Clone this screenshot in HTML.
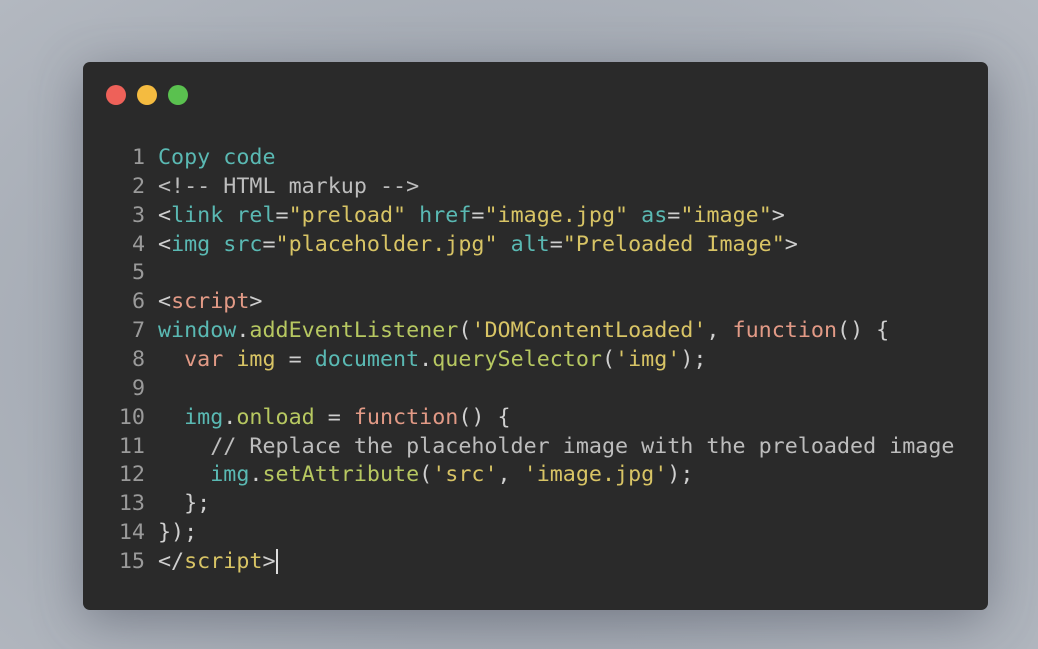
<!DOCTYPE html>
<html><head><style>
html,body{margin:0;width:1038px;height:649px;overflow:hidden;background:#a9afb8;}
.card{position:absolute;left:83px;top:62px;width:905px;height:548px;background:#2a2a2a;border-radius:7px;box-shadow:0 10px 50px rgba(60,65,80,.45);}
.dot{position:absolute;top:85px;width:20px;height:20px;border-radius:50%;}
pre{position:absolute;left:110px;top:144px;margin:0;font-family:"DejaVu Sans Mono","Liberation Mono",monospace;font-size:21.7px;line-height:28.86px;color:#cfcfcf;}
.n{color:#9a9a9a;display:inline-block;width:35px;text-align:right;margin-right:13px;}
.t{color:#5ab9b3}.y{color:#d8c465}.g{color:#b7c861}.s{color:#e29a86}.c{color:#bdbdbd}
.cur{border-right:2px solid #ddd;}
</style></head><body>
<div style="position:absolute;inset:0;background:radial-gradient(ellipse at 50% 55%,#8e939d 0%,#a6acb5 60%,#b3b8c0 100%)"></div>
<div class="card"></div>
<div class="dot" style="left:106px;background:#ee6159"></div>
<div class="dot" style="left:137px;background:#f4bb40"></div>
<div class="dot" style="left:168px;background:#5ac14f"></div>
<pre><span class="n">1</span><span class="t">Copy code</span>
<span class="n">2</span><span class="c">&lt;!-- HTML markup --&gt;</span>
<span class="n">3</span>&lt;<span class="t">link</span> <span class="t">rel</span>=<span class="y">"preload"</span> <span class="t">href</span>=<span class="y">"image.jpg"</span> <span class="t">as</span>=<span class="y">"image"</span>&gt;
<span class="n">4</span>&lt;<span class="t">img</span> <span class="t">src</span>=<span class="y">"placeholder.jpg"</span> <span class="t">alt</span>=<span class="y">"Preloaded Image"</span>&gt;
<span class="n">5</span>
<span class="n">6</span>&lt;<span class="s">script</span>&gt;
<span class="n">7</span><span class="t">window</span>.<span class="g">addEventListener</span>(<span class="y">'DOMContentLoaded'</span>, <span class="s">function</span>() {
<span class="n">8</span>  <span class="s">var</span> <span class="y">img</span> = <span class="t">document</span>.<span class="g">querySelector</span>(<span class="y">'img'</span>);
<span class="n">9</span>
<span class="n">10</span>  <span class="t">img</span>.<span class="g">onload</span> = <span class="s">function</span>() {
<span class="n">11</span>    <span class="c">// Replace the placeholder image with the preloaded image</span>
<span class="n">12</span>    <span class="t">img</span>.<span class="g">setAttribute</span>(<span class="y">'src'</span>, <span class="y">'image.jpg'</span>);
<span class="n">13</span>  };
<span class="n">14</span>});
<span class="n">15</span>&lt;/<span class="y">script</span><span class="cur">&gt;</span></pre>
</body></html>
